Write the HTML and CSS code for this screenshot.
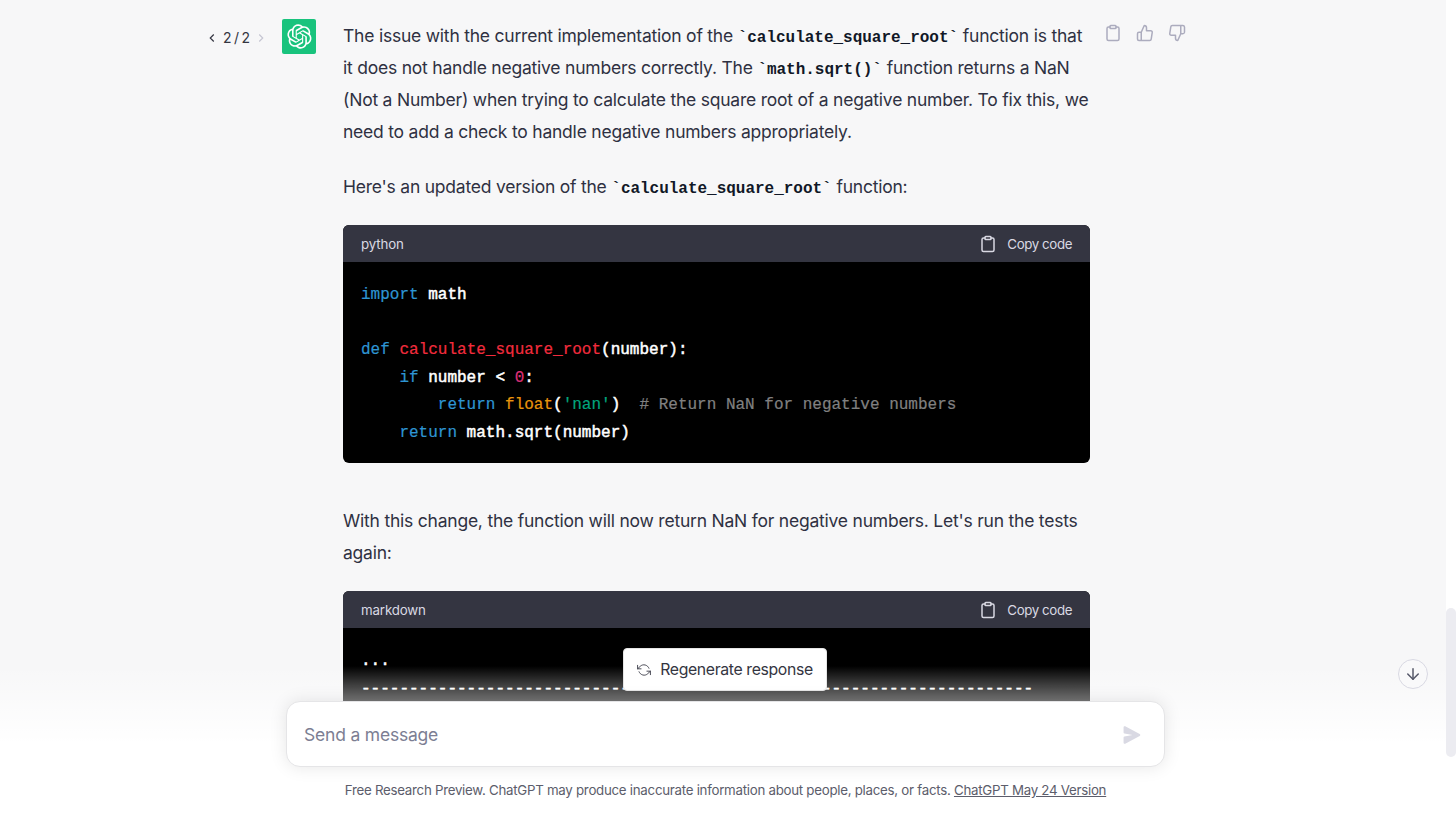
FILE: index.html
```
<!DOCTYPE html>
<html lang="en">
<head>
    <meta charset="UTF-8">
    <meta name="viewport" content="width=device-width, initial-scale=1.0">
    <title>ChatGPT</title>

    <link rel="stylesheet" href="styles.css">
</head>
<body>
    <div class="page">
        <main class="chat">
            <div class="turn">
                <div class="pager">
                    <svg class="chevron" viewBox="0 0 24 24"><polyline points="15 18 9 12 15 6"></polyline></svg>
                    <span>2 / 2</span>
                    <svg class="chevron chevronOff" viewBox="0 0 24 24"><polyline points="9 18 15 12 9 6"></polyline></svg>
                </div>
                <div class="avatar">
                    <svg viewBox="0 0 41 41"><path d="M37.532 16.8707C37.9808 15.5241 38.1363 14.0974 37.9886 12.6859C37.8409 11.2744 37.3934 9.91076 36.676 8.68622C35.6126 6.83404 33.9882 5.3676 32.0373 4.4985C30.0864 3.62941 27.9098 3.40259 25.8215 3.85078C24.8796 2.7893 23.7219 1.94125 22.4257 1.36341C21.1295 0.785575 19.7249 0.491269 18.3058 0.500197C16.1708 0.495044 14.0893 1.16803 12.3614 2.42214C10.6335 3.67624 9.34853 5.44666 8.6917 7.47815C7.30085 7.76286 5.98686 8.3414 4.8377 9.17505C3.68854 10.0087 2.73073 11.0782 2.02839 12.312C0.956464 14.1591 0.498905 16.2988 0.721698 18.4228C0.944492 20.5467 1.83612 22.5449 3.268 24.1293C2.81966 25.4759 2.66413 26.9026 2.81182 28.3141C2.95951 29.7256 3.40701 31.0892 4.12437 32.3138C5.18791 34.1659 6.8123 35.6322 8.76321 36.5013C10.7141 37.3704 12.8907 37.5973 14.9789 37.1492C15.9208 38.2107 17.0786 39.0587 18.3747 39.6366C19.6709 40.2144 21.0755 40.5087 22.4946 40.4998C24.6307 40.5054 26.7133 39.8321 28.4418 38.5772C30.1704 37.3223 31.4556 35.5506 32.1119 33.5179C33.5027 33.2332 34.8167 32.6547 35.9659 31.821C37.115 30.9874 38.0728 29.9178 38.7752 28.684C39.8458 26.8371 40.3023 24.6979 40.0789 22.5748C39.8556 20.4517 38.9639 18.4544 37.532 16.8707ZM22.4978 37.8849C20.7443 37.8874 19.0459 37.2733 17.6994 36.1501C17.7601 36.117 17.8666 36.0586 17.936 36.0161L25.9004 31.4156C26.1003 31.3019 26.2663 31.137 26.3813 30.9378C26.4964 30.7386 26.5563 30.5124 26.5549 30.2825V19.0542L29.9213 20.998C29.9389 21.0068 29.9541 21.0198 29.9656 21.0359C29.977 21.052 29.9842 21.0707 29.9867 21.0902V30.3889C29.9842 32.375 29.1946 34.2791 27.7909 35.6841C26.3872 37.0892 24.4838 37.8806 22.4978 37.8849ZM6.39227 31.0064C5.51397 29.4888 5.19742 27.7107 5.49804 25.9832C5.55718 26.0187 5.66048 26.0818 5.73461 26.1244L13.699 30.7248C13.8975 30.8408 14.1233 30.902 14.3532 30.902C14.583 30.902 14.8088 30.8408 15.0073 30.7248L24.731 25.1103V28.9979C24.7321 29.0177 24.7283 29.0376 24.7199 29.0556C24.7115 29.0736 24.6988 29.0893 24.6829 29.1012L16.6317 33.7497C14.9096 34.7416 12.8643 35.0097 10.9447 34.4954C9.02506 33.9811 7.38785 32.7263 6.39227 31.0064ZM4.29707 13.6194C5.17156 12.0998 6.55279 10.9364 8.19885 10.3327C8.19885 10.4013 8.19491 10.5228 8.19491 10.6071V19.808C8.19351 20.0378 8.25334 20.2638 8.36823 20.4629C8.48312 20.6619 8.64893 20.8267 8.84863 20.9404L18.5723 26.5542L15.206 28.4979C15.1894 28.5089 15.1703 28.5155 15.1505 28.5173C15.1307 28.5191 15.1107 28.516 15.0924 28.5082L7.04046 23.8557C5.32135 22.8601 4.06716 21.2235 3.55289 19.3046C3.03862 17.3858 3.30624 15.3413 4.29707 13.6194ZM31.955 20.0556L22.2312 14.4411L25.5976 12.4981C25.6142 12.4872 25.6333 12.4805 25.6531 12.4787C25.6729 12.4769 25.6928 12.4801 25.7111 12.4879L33.7631 17.1364C34.9967 17.849 36.0017 18.8982 36.6606 20.1613C37.3194 21.4244 37.6047 22.849 37.4832 24.2684C37.3617 25.6878 36.8382 27.0432 35.9743 28.1759C35.1103 29.3086 33.9415 30.1717 32.6047 30.6641C32.6047 30.5947 32.6047 30.4733 32.6047 30.3889V21.188C32.6066 20.9586 32.5474 20.7328 32.4332 20.5338C32.319 20.3348 32.154 20.1698 31.955 20.0556ZM35.3055 15.0128C35.2464 14.9765 35.1431 14.9142 35.069 14.8717L27.1045 10.2712C26.906 10.1554 26.6803 10.0943 26.4504 10.0943C26.2206 10.0943 25.9948 10.1554 25.7963 10.2712L16.0726 15.8858V11.9982C16.0715 11.9783 16.0753 11.9585 16.0837 11.9405C16.0921 11.9225 16.1048 11.9068 16.1207 11.8949L24.1719 7.25025C25.4053 6.53903 26.8158 6.19376 28.2383 6.25482C29.6608 6.31589 31.0364 6.78077 32.2044 7.59508C33.3723 8.40939 34.2842 9.53945 34.8334 10.8531C35.3826 12.1667 35.5464 13.6095 35.3055 15.0128ZM14.2424 21.9419L10.8752 19.9981C10.8576 19.9893 10.8423 19.9763 10.8309 19.9602C10.8195 19.9441 10.8122 19.9254 10.8098 19.9058V10.6071C10.8107 9.18295 11.2173 7.78848 11.9819 6.58696C12.7466 5.38544 13.8377 4.42659 15.1275 3.82264C16.4173 3.21869 17.8524 2.99464 19.2649 3.1767C20.6775 3.35876 22.0089 3.93941 23.1034 4.85067C23.0427 4.88379 22.937 4.94215 22.8668 4.98473L14.9024 9.58517C14.7025 9.69878 14.5366 9.86356 14.4215 10.0626C14.3065 10.2616 14.2466 10.4877 14.2479 10.7175L14.2424 21.9419ZM16.071 17.9991L20.4018 15.4978L24.7325 17.9975V22.9985L20.4018 25.4983L16.071 22.9985V17.9991Z"></path></svg>
                </div>
                <div class="message">
                    <p>The issue with the current implementation of the <code>`calculate_square_root`</code> function is that<br>
                    it does not handle negative numbers correctly. The <code>`math.sqrt()`</code> function returns a NaN<br>
                    (Not a Number) when trying to calculate the square root of a negative number. To fix this, we<br>
                    need to add a check to handle negative numbers appropriately.</p>
                    <p>Here's an updated version of the <code>`calculate_square_root`</code> function:</p>
                    <div class="codeBlock">
                        <div class="codeHeader">
                            <span>python</span>
                            <button class="copyBtn">
                                <svg class="icon" viewBox="0 0 24 24"><path d="M16 4h2a2 2 0 0 1 2 2v14a2 2 0 0 1-2 2H6a2 2 0 0 1-2-2V6a2 2 0 0 1 2-2h2"></path><rect x="8" y="2" width="8" height="4" rx="1" ry="1"></rect></svg>
                                Copy code
                            </button>
                        </div>
<pre><span class="keyword">import</span> math

<span class="keyword">def</span> <span class="title">calculate_square_root</span>(number):
    <span class="keyword">if</span> number &lt; <span class="number">0</span>:
        <span class="keyword">return</span> <span class="builtin">float</span>(<span class="string">'nan'</span>)  <span class="comment"># Return NaN for negative numbers</span>
    <span class="keyword">return</span> math.sqrt(number)</pre>
                    </div>
                    <p class="afterCode">With this change, the function will now return NaN for negative numbers. Let's run the tests<br>
                    again:</p>
                    <div class="codeBlock">
                        <div class="codeHeader">
                            <span>markdown</span>
                            <button class="copyBtn">
                                <svg class="icon" viewBox="0 0 24 24"><path d="M16 4h2a2 2 0 0 1 2 2v14a2 2 0 0 1-2 2H6a2 2 0 0 1-2-2V6a2 2 0 0 1 2-2h2"></path><rect x="8" y="2" width="8" height="4" rx="1" ry="1"></rect></svg>
                                Copy code
                            </button>
                        </div>
<pre>...
----------------------------------------------------------------------</pre>
                    </div>
                </div>
                <div class="actions">
                    <svg class="icon" viewBox="0 0 24 24"><path d="M16 4h2a2 2 0 0 1 2 2v14a2 2 0 0 1-2 2H6a2 2 0 0 1-2-2V6a2 2 0 0 1 2-2h2"></path><rect x="8" y="2" width="8" height="4" rx="1" ry="1"></rect></svg>
                    <svg class="icon" viewBox="0 0 24 24"><path d="M14 9V5a3 3 0 0 0-3-3l-4 9v11h11.28a2 2 0 0 0 2-1.7l1.38-9a2 2 0 0 0-2-2.3zM7 22H4a2 2 0 0 1-2-2v-7a2 2 0 0 1 2-2h3"></path></svg>
                    <svg class="icon" viewBox="0 0 24 24"><path d="M10 15v4a3 3 0 0 0 3 3l4-9V2H5.72a2 2 0 0 0-2 1.7l-1.38 9a2 2 0 0 0 2 2.3zm7-13h2.67A2.31 2.31 0 0 1 22 4v7a2.31 2.31 0 0 1-2.33 2H17"></path></svg>
                </div>
            </div>
        </main>
        <div class="scrollbar"><div class="thumb"></div></div>

        <div class="footer">
            <button class="regenerate">
                <svg class="icon" viewBox="0 0 24 24"><polyline points="1 4 1 10 7 10"></polyline><polyline points="23 20 23 14 17 14"></polyline><path d="M20.49 9A9 9 0 0 0 5.64 5.64L1 10m22 4l-4.64 4.36A9 9 0 0 1 3.51 15"></path></svg>
                Regenerate response
            </button>
            <div class="inputBox">
                <input class="prompt" type="text" placeholder="Send a message">
                <svg class="send" viewBox="0 0 16 16"><path d="M.5 1.163A1 1 0 0 1 1.97.28l12.868 6.837a1 1 0 0 1 0 1.766L1.969 15.72A1 1 0 0 1 .5 14.836V10.33a1 1 0 0 1 .816-.983L8.5 8 1.316 6.653A1 1 0 0 1 .5 5.67V1.163Z"></path></svg>
            </div>
            <p class="notice">Free Research Preview. ChatGPT may produce inaccurate information about people, places, or facts. <a href="#">ChatGPT May 24 Version</a></p>
        </div>

        <button class="scrollDown">
            <svg class="icon" viewBox="0 0 24 24"><line x1="12" y1="5" x2="12" y2="19"></line><polyline points="19 12 12 19 5 12"></polyline></svg>
        </button>
    </div>
</body>
</html>
```
FILE: styles.css
```
* {
    box-sizing: border-box;
}
body {
    margin: 0;
    background: #fff;
    font-family: Inter, "Liberation Sans", sans-serif;
}
p {margin: 0;}
button {
    border: none;
    padding: 0;
    background: none;
    font-family: inherit;
    cursor: pointer;
}
svg {display: block;}
.icon {
    fill: none;
    stroke: currentColor;
    stroke-width: 2;
    stroke-linecap: round;
    stroke-linejoin: round;
    width: 18px;
    height: 18px;
}
.page {
    position: relative;
    display: flex;
    height: 819px;
    overflow: hidden;
}
.chat {
    flex: 1;
    background: #f7f7f8;
}
.turn {
    display: flex;
    align-items: flex-start;
    padding: 19px 0 0 205px;
}

/* pager and avatar */
.pager {
    display: flex;
    align-items: center;
    justify-content: space-between;
    width: 63px;
    height: 37px;
    font-size: 14px;
    word-spacing: -1.5px;
    color: #343541;
    white-space: nowrap;
}
.chevron {
    width: 14px;
    height: 14px;
    fill: none;
    stroke: #343541;
    stroke-width: 2;
}
.chevronOff {stroke: #c5c5d2;}
.avatar {
    display: flex;
    align-items: center;
    justify-content: center;
    width: 34px;
    height: 35px;
    margin: 0 27px 0 14px;
    border-radius: 2px;
    background: #19c37d;
}
.avatar svg {
    width: 25px;
    height: 25px;
    fill: #fff;
}

/* message */
.message {
    width: 747px;
    padding-top: 1px;
    font-size: 17.5px;
    line-height: 32px;
    letter-spacing: -0.22px;
    color: #2f3142;
    white-space: nowrap;
}
.message p {margin-bottom: 23px;}
.message code {
    font-family: "Liberation Mono", monospace;
    font-size: 16px;
    font-weight: bold;
    letter-spacing: -0.02px;
    color: #111827;
    line-height: 1;
}
.codeBlock {
    margin-top: -1px;
    border-radius: 6px;
    overflow: hidden;
    background: #000;
}
.message .afterCode {
    margin-top: 42px;
}
.codeHeader {
    display: flex;
    align-items: center;
    justify-content: space-between;
    height: 37px;
    padding: 0 18px;
    background: #343541;
    color: #d9d9e3;
    font-size: 13.3px;
    letter-spacing: -0.15px;
}
.copyBtn {
    display: flex;
    align-items: center;
    gap: 10px;
    color: #d9d9e3;
    font-size: 13.3px;
    letter-spacing: -0.4px;
}
pre {
    margin: 0;
    padding: 20px 18px;
    height: 201px;
    font-family: "Liberation Mono", monospace;
    font-size: 16px;
    line-height: 27.5px;
    letter-spacing: 0;
    color: #fff;
    -webkit-text-stroke: 0.5px;
}
pre span {-webkit-text-stroke: 0.2px;}
.keyword {color: #2e95d3;}
.title {color: #f22c3d;}
.number {color: #df3079;}
.builtin {color: #e9950c;}
.string {color: #00a67d;}
.comment {color: #808080;}
.actions {
    display: flex;
    gap: 14px;
    margin: 5px 0 0 14px;
    color: #acacbe;
}

/* scrollbar */
.scrollbar {
    width: 10px;
    padding-top: 608px;
}
.thumb {
    height: 149px;
    border-radius: 5px;
    background: #ececf1;
}

/* footer over the conversation */
.footer {
    position: absolute;
    left: 0;
    right: 10px;
    bottom: 0;
    display: flex;
    flex-direction: column;
    align-items: center;
    height: 171px;
    padding-left: 5px;
    background: linear-gradient(rgba(255,255,255,0) 18px, #fff 95px);
}
.regenerate {
    display: flex;
    align-items: center;
    justify-content: center;
    gap: 9px;
    width: 204px;
    height: 43px;
    margin-right: 1px;
    border: 1px solid #e5e5e5;
    border-radius: 4px;
    background: #fff;
    color: #343541;
    font-size: 15.8px;
    letter-spacing: -0.36px;
    white-space: nowrap;
}
.regenerate .icon {
    width: 14px;
    height: 14px;
    stroke-width: 1.5;
}
.inputBox {
    display: flex;
    align-items: center;
    width: 879px;
    height: 66px;
    margin-top: 10px;
    padding: 1px 23px 0 17px;
    border: 1px solid #e5e5e7;
    border-radius: 14px;
    background: #fff;
    box-shadow: 0 0 17px rgba(0,0,0,0.1);
}
.prompt {
    flex: 1;
    border: none;
    padding: 0;
    outline: none;
    background: none;
    font-family: inherit;
    font-size: 17.5px;
    letter-spacing: -0.2px;
}
.prompt::placeholder {color: #7c7e93;}
.send {
    width: 18px;
    height: 18px;
    fill: #d9d9e3;
}
.notice {
    margin-top: 14px;
    font-size: 13.3px;
    line-height: 18px;
    letter-spacing: -0.27px;
    color: #5c5d6b;
    white-space: nowrap;
}
.notice a {color: inherit;}
.scrollDown {
    position: absolute;
    right: 28px;
    bottom: 130px;
    display: flex;
    align-items: center;
    justify-content: center;
    width: 30px;
    height: 30px;
    border: 1px solid #d9d9e3;
    border-radius: 50%;
    background: #f9f9fa;
    color: #565869;
}
```
